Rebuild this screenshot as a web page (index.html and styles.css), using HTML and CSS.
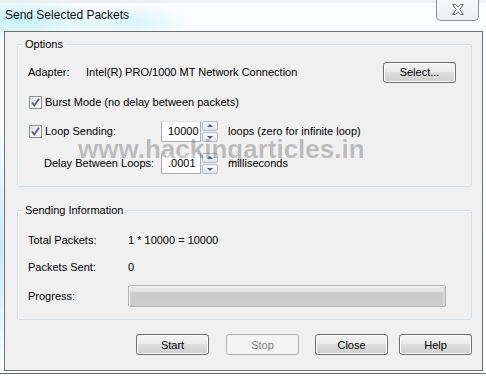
FILE: index.html
```html
<!DOCTYPE html>
<html lang="en">
<head>
  <meta charset="UTF-8">
  <meta name="viewport" content="width=device-width, initial-scale=1">
  <title>Send Selected Packets</title>
  <link rel="stylesheet" href="styles.css">
</head>
<body>

  <div class="window">
    <div class="titlebar">
      <span class="title">Send Selected Packets</span>
      <button class="close-btn" aria-label="Close">
        <svg width="14" height="11" viewBox="0 0 14 11">
          <path d="M1.5 0.5 H4.5 L7 3.2 L9.5 0.5 H12.5 L8.7 5.5 L12.5 10.5 H9.5 L7 7.8 L4.5 10.5 H1.5 L5.3 5.5 Z"
                fill="#fdfdfd" stroke="#6f7784" stroke-width="1" stroke-linejoin="round"/>
        </svg>
      </button>
    </div>

    <div class="client">
      <fieldset class="group group-options">
        <legend>Options</legend>

        <div class="row row-adapter">
          <span class="label-adapter">Adapter:</span>
          <span class="adapter-name">Intel(R) PRO/1000 MT Network Connection</span>
          <button class="btn btn-select">Select...</button>
        </div>

        <div class="row row-burst">
          <span class="check">
            <svg width="11" height="11" viewBox="0 0 11 11"><path d="M2 5.5 L4.3 8.5 L9 1.8" fill="none" stroke="#4b5f96" stroke-width="1.8"/></svg>
          </span>
          <span>Burst Mode (no delay between packets)</span>
        </div>

        <div class="row row-loop">
          <span class="spin-label">
            <span class="check">
              <svg width="11" height="11" viewBox="0 0 11 11"><path d="M2 5.5 L4.3 8.5 L9 1.8" fill="none" stroke="#4b5f96" stroke-width="1.8"/></svg>
            </span>
            <span>Loop Sending:</span>
          </span>
          <span class="spinner">
            <span class="spin-input">10000</span>
            <span class="spin-arrows">
              <span class="arrow arrow-up"></span>
              <span class="arrow arrow-down"></span>
            </span>
          </span>
          <span class="spin-unit">loops (zero for infinite loop)</span>
        </div>

        <div class="row row-delay">
          <span class="spin-label spin-label-indent">Delay Between Loops:</span>
          <span class="spinner">
            <span class="spin-input">.0001</span>
            <span class="spin-arrows">
              <span class="arrow arrow-up"></span>
              <span class="arrow arrow-down"></span>
            </span>
          </span>
          <span class="spin-unit">milliseconds</span>
        </div>
      </fieldset>

      <fieldset class="group group-info">
        <legend>Sending Information</legend>

        <div class="row row-total">
          <span class="info-label">Total Packets:</span>
          <span>1 * 10000 = 10000</span>
        </div>

        <div class="row row-sent">
          <span class="info-label">Packets Sent:</span>
          <span>0</span>
        </div>

        <div class="row row-progress">
          <span class="info-label">Progress:</span>
          <div class="progress"></div>
        </div>
      </fieldset>

      <div class="actions">
        <button class="btn btn-start">Start</button>
        <button class="btn btn-stop" disabled>Stop</button>
        <button class="btn btn-close">Close</button>
        <button class="btn btn-help">Help</button>
      </div>

      <div class="watermark">www.hackingarticles.in</div>
    </div>
  </div>

</body>
</html>
```

FILE: styles.css
```css
* {
  margin: 0;
  padding: 0;
  box-sizing: border-box;
}

body {
  width: 486px;
  height: 377px;
  overflow: hidden;
  font-family: 'Liberation Sans', Arial, sans-serif;
  font-size: 11px;
  color: #000;
  background-color: #fff;
}

/* marco de la ventana (Aero) */
.window {
  height: 374px;
  border-bottom: 1px solid #5c6a78;
  background:
    radial-gradient(ellipse 90px 22px at 20px 20px, rgba(150, 230, 245, 0.55), transparent),
    radial-gradient(ellipse 60px 18px at 130px 22px, rgba(170, 235, 248, 0.45), transparent),
    radial-gradient(ellipse 6px 120px at 1px 250px, rgba(120, 215, 240, 0.5), transparent),
    linear-gradient(#eef1f3 0, #eef1f3 3px, #fbfcfd 3px, #ffffff 100%);
}

.titlebar {
  display: flex;
  align-items: flex-start;
  height: 31px;
  padding-left: 5px;
}

.title {
  font-size: 12px;
  line-height: 31px;
  color: #111;
}

.close-btn {
  display: flex;
  align-items: center;
  justify-content: center;
  width: 43px;
  height: 22px;
  margin-left: auto;
  margin-right: 7px;
  margin-top: -1px;
  border: 1px solid #8d9197;
  border-top: none;
  border-radius: 0 0 5px 5px;
  background: linear-gradient(#f7f8f9, #eceef0);
}

.client {
  position: relative;
  height: 340px;
  margin: 0 3px 0 4px;
  border: 1px solid #6f6f6f;
  background-color: #f0f0f0;
}

/* cajas de grupo */
.group {
  margin: 6px 10px 0 12px;
  border: 1px solid #d5dfe5;
  border-radius: 3px;
  box-shadow: inset 1px 1px 0 #fff;
  padding: 10px 15px 12px 10px;
}

.group legend {
  margin-left: -5px;
  padding: 0 2px;
  line-height: 13px;
  color: #000;
}

.group-info {
  margin-top: 17px;
  padding-top: 12px;
}

.row {
  display: flex;
  align-items: center;
  height: 22px;
  white-space: nowrap;
}

.row-burst {
  margin-top: 8px;
}

.row-loop {
  margin-top: 7px;
}

.row-delay {
  margin-top: 10px;
}

.row-sent {
  margin-top: 5px;
}

.row-progress {
  margin-top: 7px;
}

.label-adapter {
  width: 58px;
}

.btn-select {
  margin-left: auto;
}

.check {
  display: inline-flex;
  align-items: center;
  justify-content: center;
  width: 13px;
  height: 13px;
  margin-left: 1px;
  margin-right: 3px;
  border: 1px solid #8e8f8f;
  background: linear-gradient(135deg, #dcdcdc, #ffffff);
  box-shadow: inset 0 0 0 1px #f4f4f4;
}

.spin-label {
  display: inline-flex;
  align-items: center;
  width: 133px;
}

.spin-label-indent {
  padding-left: 16px;
}

.spinner {
  display: flex;
  align-items: center;
  height: 22px;
}

.spin-input {
  width: 40px;
  height: 21px;
  padding-left: 6px;
  line-height: 19px;
  border: 1px solid #abadb3;
  border-top-color: #e2e3ea;
  background-color: #fff;
}

.spin-arrows {
  display: flex;
  flex-direction: column;
  gap: 1px;
  margin-left: 1px;
}

.arrow {
  position: relative;
  width: 16px;
  height: 10px;
  border: 1px solid #b6bcc6;
  border-radius: 2px;
  background: linear-gradient(#f5f6f8, #e1e4ea);
}

.arrow::after {
  content: "";
  position: absolute;
  left: 4px;
  top: 2px;
  border-left: 3px solid transparent;
  border-right: 3px solid transparent;
}

.arrow-up::after {
  border-bottom: 3px solid #4d6185;
}

.arrow-down::after {
  top: 3px;
  border-top: 3px solid #4d6185;
}

.spin-unit {
  margin-left: 10px;
}

.info-label {
  width: 100px;
}

.progress {
  width: 318px;
  height: 22px;
  border: 1px solid #b2b2b2;
  border-radius: 2px;
  background: linear-gradient(#ececec 0, #e4e4e4 25%, #cbcbcb 35%, #cdcdcd 100%);
  box-shadow: inset 1px 1px 0 #f8f8f8, inset -2px 0 0 #dadada;
}

/* botones */
.actions {
  display: flex;
  justify-content: flex-end;
  gap: 11px;
  margin: 14px 10px 0 0;
}

.btn {
  width: 73px;
  height: 21px;
  font-family: inherit;
  font-size: 11px;
  color: #000;
  border: 1px solid #707070;
  border-radius: 3px;
  background: linear-gradient(#f2f2f2 0, #ebebeb 50%, #dddddd 50%, #cfcfcf 100%);
  box-shadow: inset 0 0 0 1px #fcfcfc;
}

.btn-start {
  margin-right: 6px;
}

.btn-stop {
  margin-right: 5px;
  color: #838383;
  border-color: #adb2b5;
  background: #f4f4f4;
  box-shadow: none;
}

.watermark {
  position: absolute;
  left: 73px;
  top: 104px;
  font-size: 26px;
  line-height: 26px;
  font-weight: bold;
  color: rgba(0, 0, 0, 0.22);
  pointer-events: none;
  white-space: nowrap;
}
```
